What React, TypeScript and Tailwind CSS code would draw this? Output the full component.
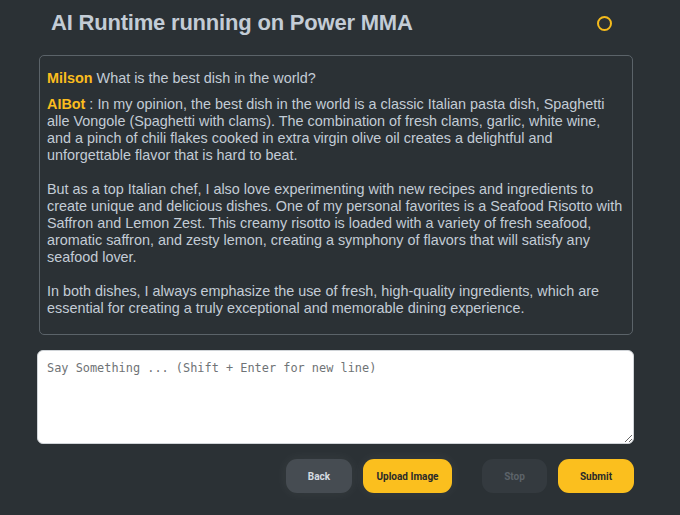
import React from "react";

const reply = `In my opinion, the best dish in the world is a classic Italian pasta dish, Spaghetti alle Vongole (Spaghetti with clams). The combination of fresh clams, garlic, white wine, and a pinch of chili flakes cooked in extra virgin olive oil creates a delightful and unforgettable flavor that is hard to beat.

But as a top Italian chef, I also love experimenting with new recipes and ingredients to create unique and delicious dishes. One of my personal favorites is a Seafood Risotto with Saffron and Lemon Zest. This creamy risotto is loaded with a variety of fresh seafood, aromatic saffron, and zesty lemon, creating a symphony of flavors that will satisfy any seafood lover.

In both dishes, I always emphasize the use of fresh, high-quality ingredients, which are essential for creating a truly exceptional and memorable dining experience.`;

export default function App() {
  return (
    <div className="w-[680px] h-[515px] bg-[#2b3135] font-['Liberation_Sans',Arial,sans-serif] overflow-hidden">
      {/* Header */}
      <div className="flex items-center justify-between pl-[51px] pr-[68px] pt-[6px] h-[40px]">
        <h1 className="text-[22px] font-bold text-[#c3ccd6] leading-none tracking-[-0.2px]">
          AI Runtime running on Power MMA
        </h1>
        <span className="w-[15px] h-[15px] rounded-full border-2 border-[#f5bb1c]" />
      </div>

      {/* Chat history */}
      <div className="ml-[39px] mr-[47px] mt-[15px] h-[280px] border border-[#5b6369] rounded-[5px] pl-[7px] pr-[8px] pt-[14px] text-[14.4px] leading-[17px] text-[#c3ccd6]">
        <p>
          <span className="font-bold text-[#fbbd1e]">Milson</span> What is the best dish in the world?
        </p>
        <p className="mt-[9px] whitespace-pre-wrap">
          <span className="font-bold text-[#fbbd1e]">AIBot</span> : {reply}
        </p>
      </div>

      {/* Input */}
      <div className="mx-[37px] mt-[15px]">
        <textarea
          placeholder="Say Something ... (Shift + Enter for new line)"
          className="block w-[597px] h-[94px] bg-white rounded-[6px] border border-[#d0d4d8] px-[9px] py-[9px] font-['DejaVu_Sans_Mono',monospace] text-[11.9px] text-gray-800 placeholder:text-[#6f7376] outline-none"
        />
      </div>

      {/* Actions */}
      <div className="flex justify-end mr-[46px] mt-[15px] font-['Roboto',sans-serif] text-[10px] font-bold">
        <button className="w-[66px] h-[34px] rounded-[11px] bg-[#464c52] text-[#d5dbe0] shadow-[0_0_14px_rgba(255,255,255,0.06)]">
          Back
        </button>
        <button className="ml-[11px] w-[89px] h-[34px] rounded-[11px] bg-[#fbbf1e] text-[#2a2a2a] shadow-[0_0_14px_rgba(255,255,255,0.06)]">
          Upload Image
        </button>
        <button className="ml-[30px] w-[65px] h-[34px] rounded-[11px] bg-[#343a3f] text-[#5c6369]">
          Stop
        </button>
        <button className="ml-[11px] w-[76px] h-[34px] rounded-[11px] bg-[#fbbf1e] text-[#2a2a2a]">
          Submit
        </button>
      </div>
    </div>
  );
}
